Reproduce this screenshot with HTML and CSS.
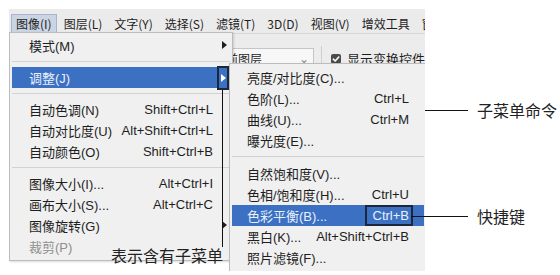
FILE: index.html
```html
<!DOCTYPE html>
<html lang="zh-CN">
<head>
    <meta charset="UTF-8">
    <title>图像菜单 - 调整子菜单</title>
    <link rel="stylesheet" href="styles.css">
</head>
<body>
    <div class="figure">
        <div class="screen">
            <div class="menubar">
                <span class="active">图像(I)</span>
                <span>图层(L)</span>
                <span>文字(Y)</span>
                <span>选择(S)</span>
                <span>滤镜(T)</span>
                <span>3D(D)</span>
                <span>视图(V)</span>
                <span>增效工具</span>
                <span>窗口(W)</span>
            </div>

            <div class="optionsbar">
                <div class="combo">
                    <span>当前图层</span>
                    <span class="chev">&#8964;</span>
                </div>
                <div class="vdivider"></div>
                <div class="check">
                    <span class="box">
                        <svg width="10" height="10" viewBox="0 0 10 10">
                            <path d="M2.3 5.2 L4.2 7 L7.8 3" fill="none" stroke="#fff" stroke-width="1.6" stroke-linecap="round" stroke-linejoin="round"/>
                        </svg>
                    </span>
                    显示变换控件
                </div>
            </div>

            <!-- 图像 menu -->
            <div class="menu menu-main">
                <div class="item"><span>模式(M)</span><i class="arrow"></i></div>
                <div class="sep"></div>
                <div class="item hl"><span>调整(J)</span><span class="arrow-box"><i class="arrow white"></i></span></div>
                <div class="sep"></div>
                <div class="item"><span>自动色调(N)</span><span>Shift+Ctrl+L</span></div>
                <div class="item"><span>自动对比度(U)</span><span>Alt+Shift+Ctrl+L</span></div>
                <div class="item"><span>自动颜色(O)</span><span>Shift+Ctrl+B</span></div>
                <div class="sep"></div>
                <div class="item"><span>图像大小(I)...</span><span>Alt+Ctrl+I</span></div>
                <div class="item"><span>画布大小(S)...</span><span>Alt+Ctrl+C</span></div>
                <div class="item"><span>图像旋转(G)</span><i class="arrow"></i></div>
                <div class="item disabled"><span>裁剪(P)</span></div>
            </div>

            <!-- 调整 submenu -->
            <div class="menu menu-sub">
                <div class="item"><span>亮度/对比度(C)...</span></div>
                <div class="item"><span>色阶(L)...</span><span>Ctrl+L</span></div>
                <div class="item"><span>曲线(U)...</span><span>Ctrl+M</span></div>
                <div class="item"><span>曝光度(E)...</span></div>
                <div class="sep"></div>
                <div class="item"><span>自然饱和度(V)...</span></div>
                <div class="item"><span>色相/饱和度(H)...</span><span>Ctrl+U</span></div>
                <div class="item hl"><span>色彩平衡(B)...</span><span class="key-box">Ctrl+B</span></div>
                <div class="item"><span>黑白(K)...</span><span>Alt+Shift+Ctrl+B</span></div>
                <div class="item"><span>照片滤镜(F)...</span></div>
            </div>
        </div>

        <!-- callouts -->
        <div class="note note-sub"><span class="hline"></span>子菜单命令</div>
        <div class="note note-key"><span class="hline"></span>快捷键</div>
        <div class="note note-arrow"><span class="vline"></span>表示含有子菜单</div>
    </div>
</body>
</html>
```

FILE: styles.css
```css
* {
    box-sizing: border-box;
    margin: 0;
    padding: 0;
}

body {
    background-color: #fff;
    font-family: "Liberation Sans", "Noto Sans CJK SC", sans-serif;
    font-size: 13px;
    color: #1e1e1e;
}

.figure {
    position: relative;
    width: 560px;
    height: 275px;
    padding: 9px 0 0 9px;
}

.screen {
    position: relative;
    width: 416px;
    height: 262px;
    overflow: hidden;
}

/* top menu bar */
.menubar {
    display: flex;
    align-items: center;
    height: 25px;
    padding: 4px 0 0 2px;
    background-color: #ebebeb;
    border-bottom: 1px solid #d6d6d6;
    font-family: "Noto Sans CJK SC", sans-serif;
    font-size: 12px;
    white-space: nowrap;
}

.menubar span {
    padding: 0 4px;
    margin-right: 2px;
    line-height: 17px;
    border: 1px solid transparent;
}

.menubar .active {
    background-color: #cbd4e2;
    border-color: #a7b5ca;
}

/* options bar under the menus */
.optionsbar {
    display: flex;
    align-items: center;
    height: 46px;
    padding: 3px 0 0 191px;
    background-color: #ececec;
    white-space: nowrap;
}

.combo {
    display: flex;
    align-items: center;
    justify-content: space-between;
    width: 173px;
    height: 22px;
    padding: 0 4px 0 13px;
    background-color: #f7f7f7;
    border: 1px solid #c6c6c6;
    font-size: 12px;
}

.chev {
    color: #888;
    font-size: 12px;
    line-height: 10px;
}

.vdivider {
    width: 1px;
    height: 26px;
    margin: 0 9px 0 7px;
    background-color: #cfcfcf;
}

.check {
    display: flex;
    align-items: center;
    gap: 6px;
}

.check .box {
    display: flex;
    width: 10px;
    height: 10px;
    border-radius: 2px;
    background-color: #4b4b4b;
}

/* dropdown menus */
.menu {
    position: absolute;
    padding: 2px 0 3px;
    background-color: #f0f0f0;
    border: 1px solid #bcbcbc;
    box-shadow: 1px 1px 2px rgba(0, 0, 0, 0.15);
}

.menu-main {
    left: 0;
    top: 23px;
    width: 224px;
}

.menu-sub {
    left: 220px;
    top: 54px;
    width: 198px;
    padding-top: 3px;
}

.item {
    position: relative;
    display: flex;
    align-items: center;
    justify-content: space-between;
    height: 21px;
    padding: 0 19px;
    white-space: nowrap;
}

.menu-sub .item {
    padding: 0 17px;
}

.item.hl {
    margin: 0 2px;
    padding-left: 17px;
    background-color: #3b70c2;
    color: #e9f0fb;
}

.menu-sub .item.hl {
    padding: 0 15px;
}

.item.disabled {
    color: #8e8e8e;
}

.sep {
    height: 1px;
    margin: 5px 2px;
    background-color: #d2d2d2;
}

.menu-sub .sep {
    margin-bottom: 6px;
}

.arrow {
    position: absolute;
    right: 5px;
    top: 6px;
    width: 0;
    height: 0;
    border-left: 5px solid #1e1e1e;
    border-top: 4px solid transparent;
    border-bottom: 4px solid transparent;
}

.arrow.white {
    position: static;
    border-left-color: #fff;
}

.arrow-box {
    position: absolute;
    right: 1px;
    top: -1px;
    bottom: -2px;
    width: 12px;
    display: flex;
    align-items: center;
    justify-content: center;
    border: 2px solid #1b273b;
}

.key-box {
    align-self: stretch;
    display: flex;
    align-items: center;
    margin-right: -4px;
    padding: 0 2px 0 6px;
    border: 2px solid #1b273b;
}

/* callouts */
.note {
    position: absolute;
    display: flex;
    align-items: center;
    gap: 9px;
    font-family: "Noto Sans CJK SC", sans-serif;
    font-size: 16px;
    color: #222;
    white-space: nowrap;
}

.hline {
    height: 1px;
    background-color: #111;
}

.note-sub {
    left: 425px;
    top: 98px;
}

.note-sub .hline {
    width: 43px;
}

.note-key {
    left: 411px;
    top: 204px;
}

.note-key .hline {
    width: 57px;
}

.note-arrow {
    left: 110px;
    top: 90px;
    width: 113px;
    flex-direction: column;
    align-items: flex-end;
    gap: 0;
    line-height: 17px;
}

.vline {
    width: 1px;
    height: 157px;
    background-color: #111;
}
```
